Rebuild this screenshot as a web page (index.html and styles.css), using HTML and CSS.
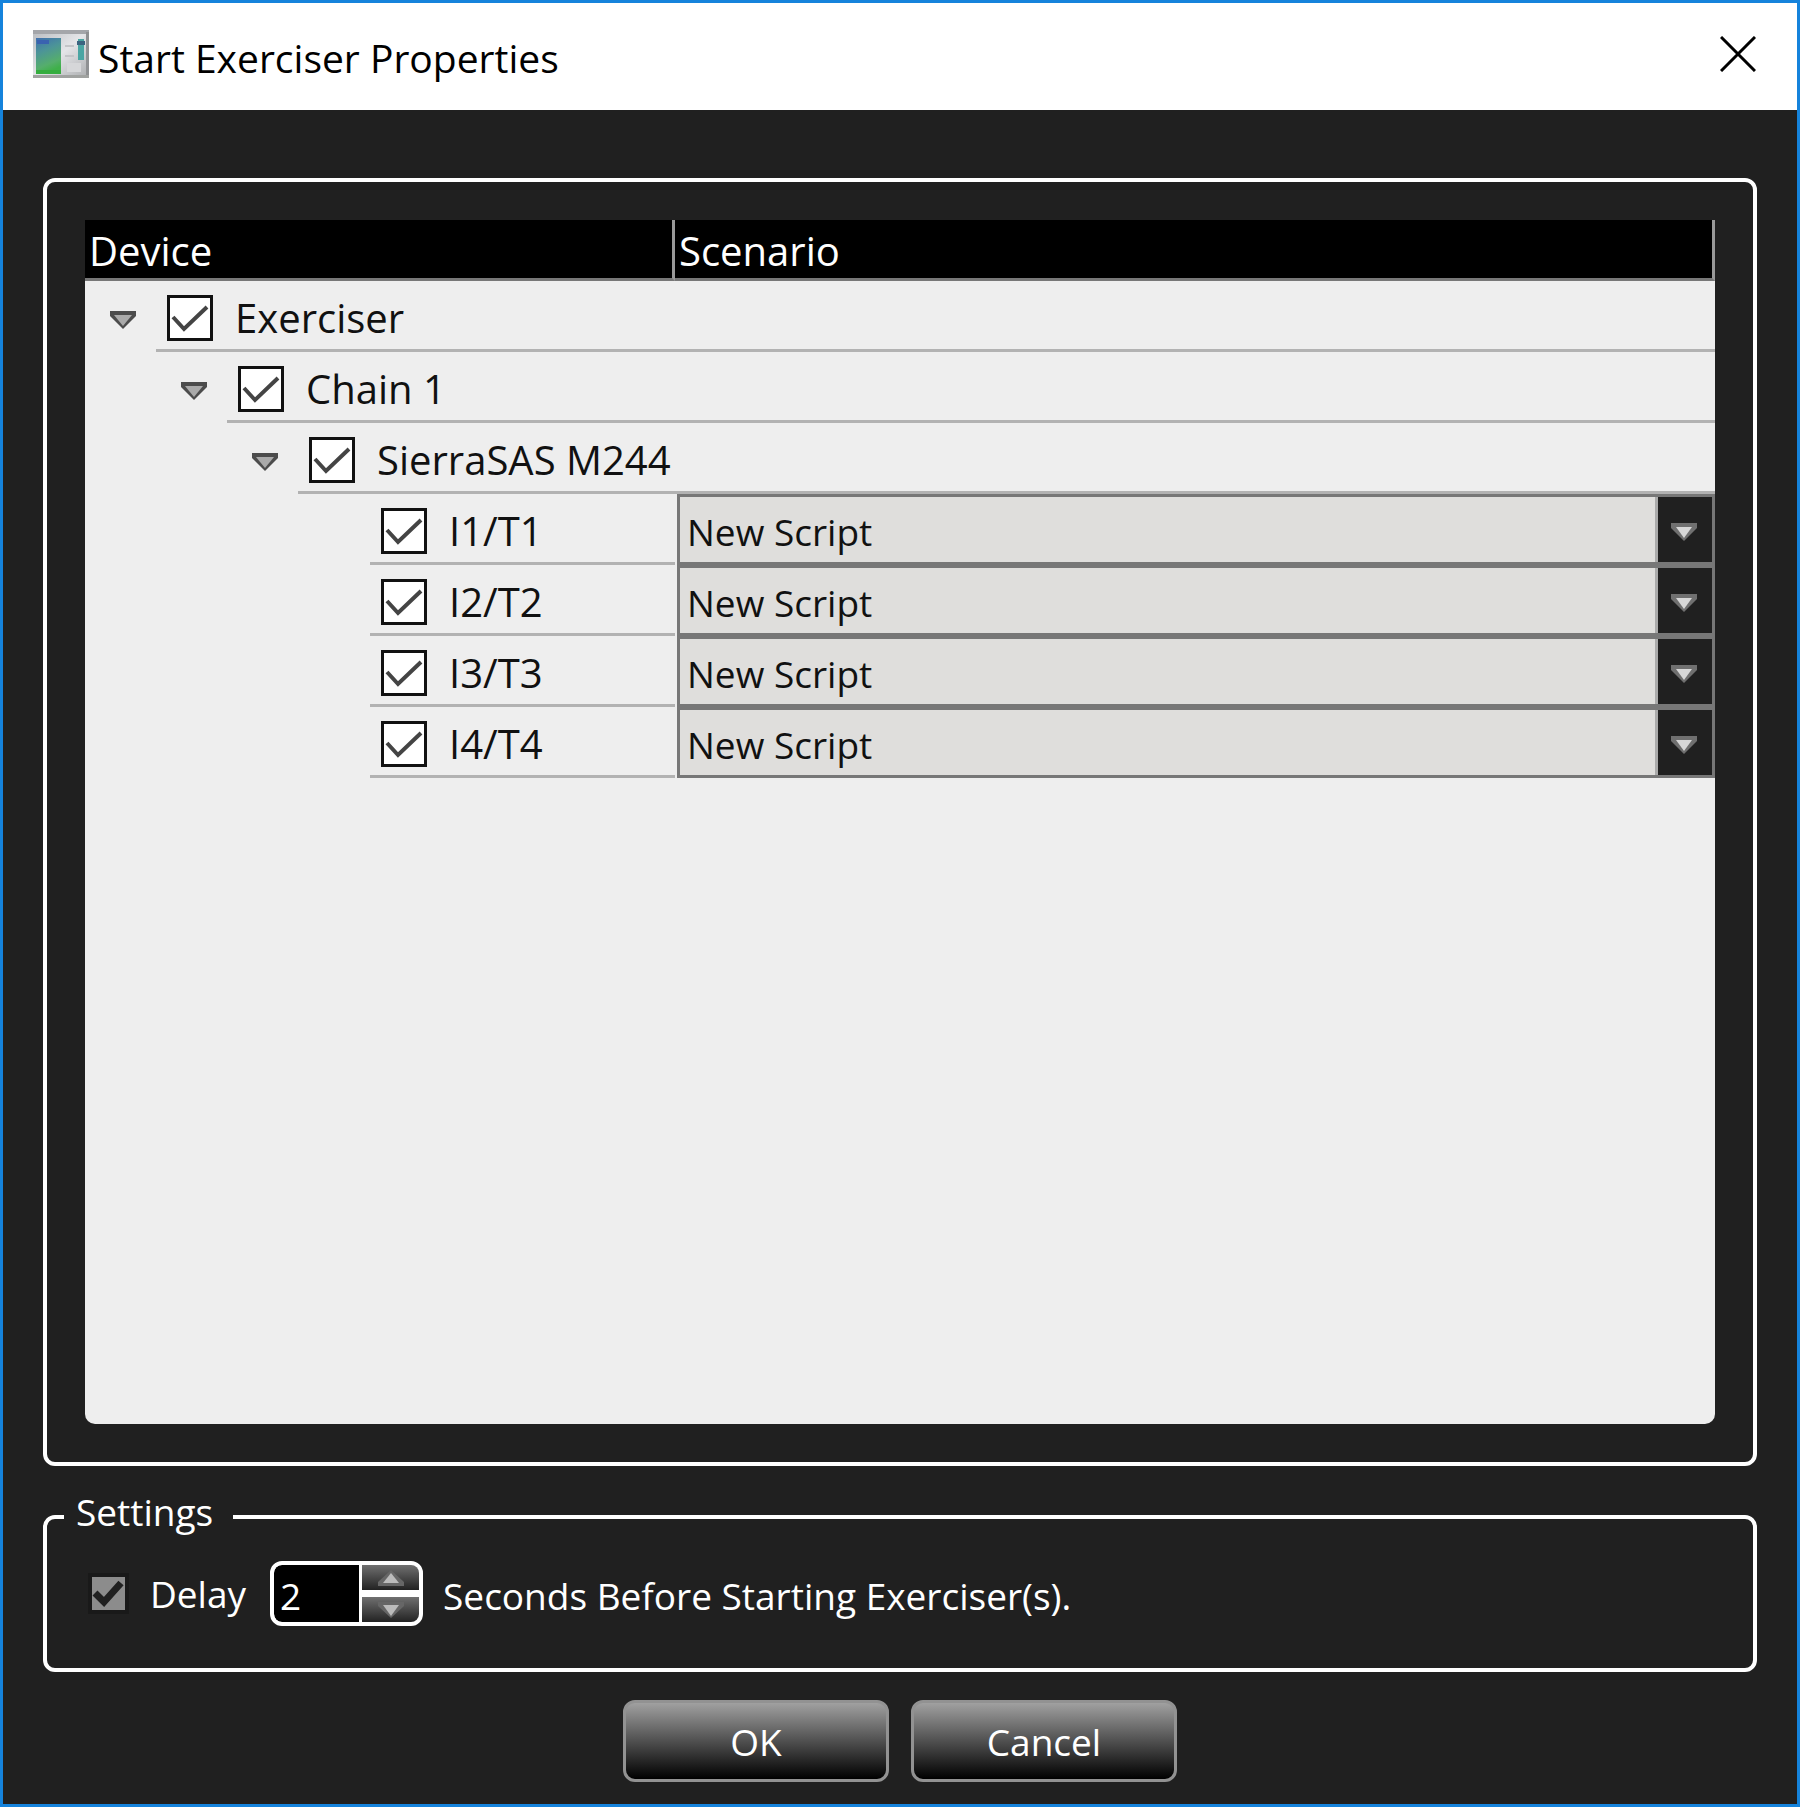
FILE: index.html
```html
<!DOCTYPE html>
<html lang="en">
<head>
    <meta charset="UTF-8">
    <meta name="viewport" content="width=device-width, initial-scale=1.0">
    <title>Start Exerciser Properties</title>
    <link rel="stylesheet" href="styles.css">
</head>
<body>
    <div class="window">
        <!-- Title bar -->
        <header class="titlebar">
            <svg class="app-icon" viewBox="0 0 56 48" aria-hidden="true">
                <defs>
                    <linearGradient id="frame" x1="0" y1="0" x2="1" y2="1">
                        <stop offset="0" stop-color="#b9bcc0"/>
                        <stop offset="0.5" stop-color="#e4e5e8"/>
                        <stop offset="1" stop-color="#a9abad"/>
                    </linearGradient>
                    <linearGradient id="screen" x1="0" y1="0" x2="0.3" y2="1">
                        <stop offset="0" stop-color="#3f6fae"/>
                        <stop offset="0.4" stop-color="#4c9498"/>
                        <stop offset="0.8" stop-color="#55ae6c"/>
                        <stop offset="1" stop-color="#3fb04a"/>
                    </linearGradient>
                </defs>
                <rect width="56" height="48" fill="url(#frame)"/>
                <rect width="56" height="4" fill="#a4a6aa"/>
                <rect x="53" y="2" width="3" height="46" fill="#8f9193"/>
                <rect y="45" width="56" height="3" fill="#a0a2a0"/>
                <rect x="3" y="8" width="25" height="36" fill="url(#screen)"/>
                <rect x="4" y="10" width="12" height="4" fill="#3a62b0"/>
                <rect x="3" y="40" width="25" height="4" fill="#35ad3f"/>
                <rect x="32" y="15" width="9" height="2" fill="#c3c5c8"/>
                <rect x="32" y="25" width="9" height="2" fill="#c3c5c8"/>
                <rect x="34" y="33" width="14" height="9" fill="#d6d7d9"/>
                <rect x="45" y="9" width="6" height="21" fill="#4aa5a3"/>
                <rect x="44" y="11" width="8" height="4" fill="#3b6480"/>
            </svg>
            <h1>Start Exerciser Properties</h1>
            <button class="close" type="button" aria-label="Close">
                <svg viewBox="0 0 36 36" aria-hidden="true"><path d="M1 1L35 35M35 1L1 35"/></svg>
            </button>
        </header>

        <!-- Dialog content -->
        <form class="content">
            <div class="group devices">
                <div class="list">
                    <table class="tree">
                        <thead>
                            <tr>
                                <th class="col-device" scope="col">Device</th>
                                <th scope="col">Scenario</th>
                            </tr>
                        </thead>
                        <tbody>
                            <tr>
                                <td colspan="2">
                                    <div class="node level-1">
                                        <svg class="expander" viewBox="0 0 26 18" aria-hidden="true"><path d="M0 0H26V5L13 18L0 5Z"/><path class="shine" d="M4 4H22L13 15Z"/></svg>
                                        <label class="item"><input class="check" type="checkbox" checked>Exerciser</label>
                                    </div>
                                </td>
                            </tr>
                            <tr>
                                <td colspan="2">
                                    <div class="node level-2">
                                        <svg class="expander" viewBox="0 0 26 18" aria-hidden="true"><path d="M0 0H26V5L13 18L0 5Z"/><path class="shine" d="M4 4H22L13 15Z"/></svg>
                                        <label class="item"><input class="check" type="checkbox" checked>Chain 1</label>
                                    </div>
                                </td>
                            </tr>
                            <tr>
                                <td colspan="2">
                                    <div class="node level-3">
                                        <svg class="expander" viewBox="0 0 26 18" aria-hidden="true"><path d="M0 0H26V5L13 18L0 5Z"/><path class="shine" d="M4 4H22L13 15Z"/></svg>
                                        <label class="item"><input class="check" type="checkbox" checked>SierraSAS M244</label>
                                    </div>
                                </td>
                            </tr>
                            <tr>
                                <td><div class="node level-4"><label class="item"><input class="check" type="checkbox" checked>I1/T1</label></div></td>
                                <td class="scenario">
                                    <div class="combo">
                                        <select aria-label="Scenario for I1/T1"><option>New Script</option></select>
                                        <svg viewBox="0 0 26 18" aria-hidden="true"><path d="M0 0H26V5L13 18L0 5Z"/><path class="shine" d="M5 4H21L13 15Z"/></svg>
                                    </div>
                                </td>
                            </tr>
                            <tr>
                                <td><div class="node level-4"><label class="item"><input class="check" type="checkbox" checked>I2/T2</label></div></td>
                                <td class="scenario">
                                    <div class="combo">
                                        <select aria-label="Scenario for I2/T2"><option>New Script</option></select>
                                        <svg viewBox="0 0 26 18" aria-hidden="true"><path d="M0 0H26V5L13 18L0 5Z"/><path class="shine" d="M5 4H21L13 15Z"/></svg>
                                    </div>
                                </td>
                            </tr>
                            <tr>
                                <td><div class="node level-4"><label class="item"><input class="check" type="checkbox" checked>I3/T3</label></div></td>
                                <td class="scenario">
                                    <div class="combo">
                                        <select aria-label="Scenario for I3/T3"><option>New Script</option></select>
                                        <svg viewBox="0 0 26 18" aria-hidden="true"><path d="M0 0H26V5L13 18L0 5Z"/><path class="shine" d="M5 4H21L13 15Z"/></svg>
                                    </div>
                                </td>
                            </tr>
                            <tr>
                                <td><div class="node level-4"><label class="item"><input class="check" type="checkbox" checked>I4/T4</label></div></td>
                                <td class="scenario">
                                    <div class="combo">
                                        <select aria-label="Scenario for I4/T4"><option>New Script</option></select>
                                        <svg viewBox="0 0 26 18" aria-hidden="true"><path d="M0 0H26V5L13 18L0 5Z"/><path class="shine" d="M5 4H21L13 15Z"/></svg>
                                    </div>
                                </td>
                            </tr>
                        </tbody>
                    </table>
                </div>
            </div>

            <fieldset class="group settings">
                <legend>Settings</legend>
                <div class="delay">
                    <label class="delay-label"><input class="check-dark" type="checkbox" checked>Delay</label>
                    <div class="spinner">
                        <input id="seconds" type="number" value="2" min="0">
                        <div class="steps">
                            <button type="button" aria-label="Increase" onclick="seconds.stepUp()">
                                <svg viewBox="0 0 26 16" aria-hidden="true"><path d="M0 16V12L13 0L26 12V16Z"/><path class="shine" d="M5 13H21L13 3Z"/></svg>
                            </button>
                            <button type="button" aria-label="Decrease" onclick="seconds.stepDown()">
                                <svg viewBox="0 0 26 16" aria-hidden="true"><path d="M0 0H26V4L13 16L0 4Z"/><path class="shine" d="M5 3H21L13 14Z"/></svg>
                            </button>
                        </div>
                    </div>
                    <label class="delay-text" for="seconds">Seconds Before Starting Exerciser(s).</label>
                </div>
            </fieldset>

            <div class="actions">
                <button class="button" type="button">OK</button>
                <button class="button" type="button">Cancel</button>
            </div>
        </form>
    </div>
</body>
</html>
```
FILE: styles.css
```css
* {
    box-sizing: border-box;
    margin: 0;
    padding: 0;
}

body {
    font-family: "Open Sans", "Noto Sans", sans-serif;
    font-size: 37px;
    line-height: 48px;
    color: #fff;
    background: #202020;
}

button,
input,
select {
    font: inherit;
    color: inherit;
}

.window {
    display: flex;
    flex-direction: column;
    min-height: 100vh;
    border: 3px solid #1583dc;
}

/* Title bar */
.titlebar {
    display: flex;
    align-items: center;
    height: 107px;
    padding: 0 41px 0 30px;
    background: #fff;
    color: #000;
}

.app-icon {
    width: 56px;
    height: 48px;
    margin-bottom: 6px;
}

.titlebar h1 {
    flex: 1;
    margin-left: 9px;
    padding-top: 2px;
    font-size: 39px;
    font-weight: 400;
}

.close {
    width: 36px;
    height: 36px;
    margin-bottom: 6px;
    border: none;
    background: none;
}

.close svg {
    display: block;
    fill: none;
    stroke: #000;
    stroke-width: 3;
}

/* Content */
.content {
    display: flex;
    flex: 1;
    flex-direction: column;
    padding: 68px 40px 22px;
}

.group {
    border: 4px solid #fff;
    border-radius: 12px;
}

.devices {
    display: flex;
    flex: 1;
    padding: 38px;
}

.list {
    flex: 1;
    overflow: hidden;
    border-radius: 0 0 10px 10px;
    background: #eee;
    color: #111;
}

/* Device tree */
.tree {
    width: 100%;
    table-layout: fixed;
    border-collapse: separate;
    border-spacing: 0;
    font-size: 40px;
}

.tree th {
    height: 61px;
    padding: 4px 4px 0;
    border-right: 3px solid #999;
    border-bottom: 3px solid #777;
    background: #000;
    color: #fff;
    font-weight: 400;
    text-align: left;
}

.tree .col-device {
    width: 590px;
}

.node {
    display: flex;
    align-items: center;
    height: 71px;
    padding-top: 6px;
}

.level-2 {
    padding-left: 71px;
}

.level-3 {
    padding-left: 142px;
}

.level-4 {
    padding-left: 285px;
}

.expander {
    width: 26px;
    height: 18px;
    margin: 0 20px 0 25px;
    fill: #4c4c4c;
}

.expander .shine {
    fill: #aaa;
}

.item {
    display: flex;
    flex: 1;
    align-items: center;
    gap: 22px;
    height: 65px;
    padding-left: 11px;
    border-bottom: 3px solid #b2b2b2;
}

.check {
    appearance: none;
    width: 46px;
    height: 46px;
    border: 3px solid #111;
    background: #fff;
}

.check:checked {
    background: #fff url("data:image/svg+xml,%3Csvg xmlns='http://www.w3.org/2000/svg' viewBox='0 0 40 40'%3E%3Cpath d='M3 19L14 31L37 9' fill='none' stroke='%23444' stroke-width='4'/%3E%3C/svg%3E");
}

.scenario {
    padding-left: 2px;
}

.combo {
    position: relative;
    height: 71px;
}

.combo select {
    appearance: none;
    width: 100%;
    height: 71px;
    padding: 5px 60px 0 7px;
    border: 3px solid #777;
    border-radius: 0;
    background: linear-gradient(to left, #202020 54px, #aaa 54px, #aaa 57px, #dfdedc 57px);
    font-size: 37px;
}

.combo svg {
    position: absolute;
    top: 29px;
    right: 18px;
    width: 26px;
    height: 18px;
    fill: #707070;
    pointer-events: none;
}

.combo .shine {
    fill: #d8d8d8;
}

/* Settings */
.settings {
    margin-top: 27px;
    padding: 20px 38px 42px 17px;
}

.settings legend {
    height: 48px;
    padding: 0 20px 0 12px;
    line-height: 38px;
}

.delay {
    display: flex;
    align-items: center;
    padding-left: 28px;
}

.delay-label {
    display: flex;
    align-items: center;
    gap: 25px;
    margin-right: 24px;
}

.check-dark {
    appearance: none;
    width: 33px;
    height: 33px;
    background: #8c8c8c;
    outline: 4px solid #191919;
}

.check-dark:checked {
    background: #8c8c8c url("data:image/svg+xml,%3Csvg xmlns='http://www.w3.org/2000/svg' viewBox='0 0 33 33'%3E%3Cpath d='M3 16L12 25L29 6' fill='none' stroke='%23202020' stroke-width='7'/%3E%3C/svg%3E");
}

.spinner {
    display: flex;
    width: 153px;
    height: 65px;
    margin-right: 20px;
    overflow: hidden;
    border: 4px solid #fff;
    border-radius: 12px;
    background: #fff;
}

.spinner input {
    appearance: textfield;
    width: 85px;
    padding: 4px 0 0 6px;
    border: none;
    border-radius: 8px 0 0 8px;
    background: #000;
}

.steps {
    display: flex;
    flex: 1;
    flex-direction: column;
    gap: 7px;
    margin-left: 3px;
}

.steps button {
    display: flex;
    flex: 1;
    align-items: center;
    justify-content: center;
    border: none;
    background: linear-gradient(#707070, #222);
}

.steps svg {
    width: 26px;
    height: 16px;
    fill: #666;
}

.steps .shine {
    fill: #bbb;
}

.delay-text {
    padding-top: 4px;
}

/* Buttons */
.actions {
    display: flex;
    justify-content: center;
    gap: 22px;
    margin-top: 28px;
}

.button {
    width: 266px;
    height: 82px;
    padding-top: 2px;
    border: 3px solid #929292;
    border-radius: 12px;
    background: linear-gradient(#a0a0a0, #000);
}
```
